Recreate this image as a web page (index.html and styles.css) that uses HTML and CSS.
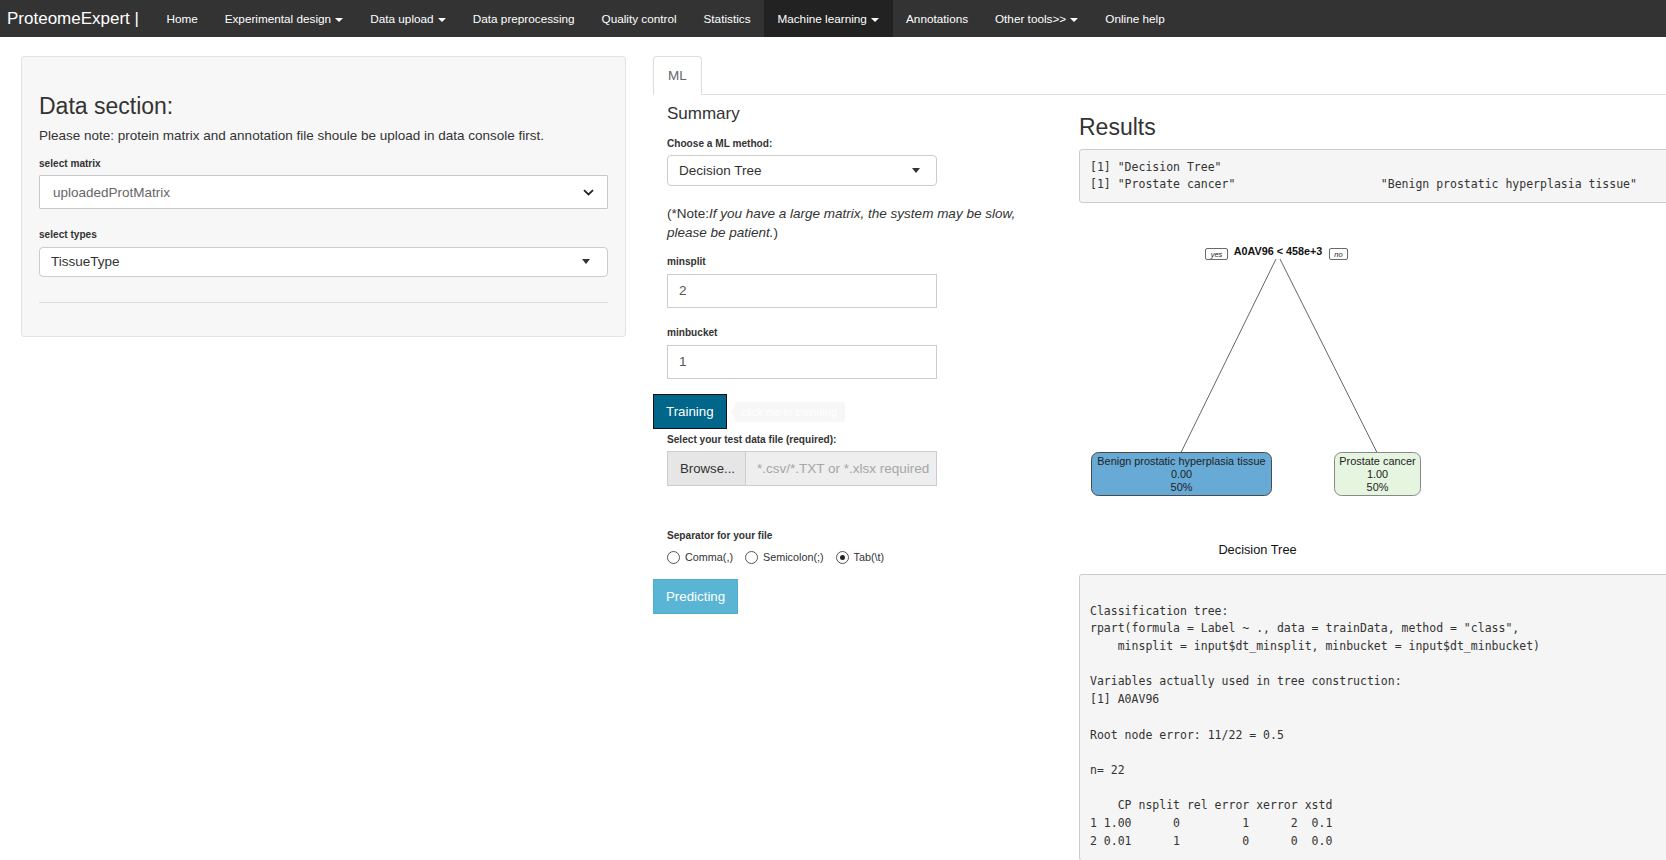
FILE: index.html
```html
<!DOCTYPE html>
<html lang="en">
<head>
<meta charset="utf-8">
<title>ProteomeExpert</title>
<link rel="stylesheet" href="styles.css">
</head>
<body>
<nav class="navbar">
  <span class="brand">ProteomeExpert |</span>
  <ul class="nav">
    <li class="nav-item">Home</li>
    <li class="nav-item">Experimental design <span class="caret"></span></li>
    <li class="nav-item">Data upload <span class="caret"></span></li>
    <li class="nav-item">Data preprocessing</li>
    <li class="nav-item">Quality control</li>
    <li class="nav-item">Statistics</li>
    <li class="nav-item active">Machine learning <span class="caret"></span></li>
    <li class="nav-item">Annotations</li>
    <li class="nav-item">Other tools&gt;&gt; <span class="caret"></span></li>
    <li class="nav-item">Online help</li>
  </ul>
</nav>

<div class="page">
  <aside class="well">
    <h3 class="well-title">Data section:</h3>
    <p class="well-note">Please note: protein matrix and annotation file shoule be upload in data console first.</p>
    <label class="field-label">select matrix</label>
    <div class="native-select">
      <span class="native-value">uploadedProtMatrix</span>
      <svg class="chev" width="11" height="7" viewBox="0 0 11 7"><polyline points="1,1.2 5.5,5.4 10,1.2" fill="none" stroke="#222" stroke-width="1.8"/></svg>
    </div>
    <label class="field-label types-label">select types</label>
    <div class="selectize wide">
      <span class="sel-value">TissueType</span>
      <span class="sel-caret"></span>
    </div>
    <hr class="well-rule">
  </aside>

  <main class="main">
    <ul class="tabs">
      <li class="tab">ML</li>
    </ul>
    <div class="tab-content">
      <section class="ml-col">
        <h4 class="summary in">Summary</h4>
        <label class="field-label in method-label">Choose a ML method:</label>
        <div class="selectize narrow in">
          <span class="sel-value">Decision Tree</span>
          <span class="sel-caret"></span>
        </div>
        <p class="note in"><span class="note-lead">(*Note:</span><em>If you have a large matrix, the system may be slow,</em> <em>please be patient.</em><span class="note-tail">)</span></p>
        <label class="field-label in split-label">minsplit</label>
        <div class="text-input in">2</div>
        <label class="field-label in bucket-label">minbucket</label>
        <div class="text-input in">1</div>
        <div class="train-row">
          <span class="btn btn-train">Training</span>
          <span class="tooltip">click me to trainning</span>
        </div>
        <label class="field-label in file-label">Select your test data file (required):</label>
        <div class="file-row in">
          <span class="browse">Browse...</span>
          <span class="file-text">*.csv/*.TXT or *.xlsx required</span>
        </div>
        <label class="field-label in sep-label">Separator for your file</label>
        <div class="radio-row in">
          <span class="radio"></span><span class="radio-text">Comma(,)</span>
          <span class="radio"></span><span class="radio-text">Semicolon(;)</span>
          <span class="radio checked"></span><span class="radio-text">Tab(\t)</span>
        </div>
        <span class="btn btn-predict">Predicting</span>
      </section>

      <section class="results">
        <h3 class="results-title">Results</h3>
<pre class="console console-top">[1] "Decision Tree"
[1] "Prostate cancer"                     "Benign prostatic hyperplasia tissue"</pre>
        <svg class="tree" width="587" height="371" viewBox="0 0 587 371">
          <line x1="197" y1="56" x2="102" y2="249.5" class="tree-edge"/>
          <line x1="201" y1="56" x2="298" y2="249.5" class="tree-edge"/>
          <rect x="126.5" y="45.5" width="22" height="11" rx="1.5" class="tree-tag"/>
          <text x="137.5" y="53.6" class="tree-yn">yes</text>
          <text x="199" y="52" class="tree-split">A0AV96 &lt; 458e+3</text>
          <rect x="250.5" y="45.5" width="18" height="11" rx="1.5" class="tree-tag"/>
          <text x="259.5" y="53.6" class="tree-yn">no</text>
          <rect x="12.5" y="249.5" width="180" height="43" rx="7" class="leaf leaf-blue"/>
          <text x="102.5" y="262" class="tree-leaf">Benign prostatic hyperplasia tissue</text>
          <text x="102.5" y="275" class="tree-leaf">0.00</text>
          <text x="102.5" y="288" class="tree-leaf">50%</text>
          <rect x="255.5" y="249.5" width="86" height="43" rx="7" class="leaf leaf-green"/>
          <text x="298.5" y="262" class="tree-leaf">Prostate cancer</text>
          <text x="298.5" y="275" class="tree-leaf">1.00</text>
          <text x="298.5" y="288" class="tree-leaf">50%</text>
          <text x="178.5" y="350.5" class="tree-caption">Decision Tree</text>
        </svg>
<pre class="console console-bottom">

Classification tree:
rpart(formula = Label ~ ., data = trainData, method = "class", 
    minsplit = input$dt_minsplit, minbucket = input$dt_minbucket)

Variables actually used in tree construction:
[1] A0AV96

Root node error: 11/22 = 0.5

n= 22

    CP nsplit rel error xerror xstd
1 1.00      0         1      2  0.1
2 0.01      1         0      0  0.0
</pre>
      </section>
    </div>
  </main>
</div>
</body>
</html>
```

FILE: styles.css
```css
* { box-sizing: border-box; }

html, body {
  margin: 0;
  padding: 0;
  height: 100%;
  overflow: hidden;
}

body {
  font-family: "Liberation Sans", Arial, Helvetica, sans-serif;
  font-size: 13.5px;
  color: #333;
  background: #fff;
}

/* ---------- navbar ---------- */
.navbar {
  display: flex;
  height: 37px;
  background: #333;
  color: #fff;
}

.brand {
  font-size: 17px;
  line-height: 37px;
  padding: 0 14px 0 7px;
  white-space: nowrap;
}

.nav {
  display: flex;
  list-style: none;
  margin: 0;
  padding: 0;
}

.nav-item {
  font-size: 11.75px;
  line-height: 37px;
  padding: 0 13.45px;
  white-space: nowrap;
  color: #fff;
}

.nav-item.active { background: #222; }

.caret {
  display: inline-block;
  width: 0;
  height: 0;
  border-top: 4px solid #fff;
  border-left: 4px solid transparent;
  border-right: 4px solid transparent;
  vertical-align: middle;
  margin-left: 1px;
}

/* ---------- page ---------- */
.page {
  display: grid;
  grid-template-columns: 605px 1fr;
  column-gap: 27px;
  padding: 19px 0 0 21px;
}

.well {
  align-self: start;
  background: #f7f7f7;
  border: 1px solid #e3e3e3;
  border-radius: 3px;
  padding: 36px 17px 33px 17px;
}

.well-title {
  margin: 0 0 7px;
  font-size: 23px;
  font-weight: normal;
  line-height: 26px;
}

.well-note {
  margin: 0 0 9.5px;
  line-height: 20px;
}

.field-label {
  display: block;
  font-size: 10.1px;
  font-weight: bold;
  line-height: 15px;
  margin-bottom: 4.5px;
  color: #333;
}

.types-label { margin-top: 17.5px; margin-bottom: 5.5px; }

.native-select {
  display: flex;
  align-items: center;
  justify-content: space-between;
  height: 34px;
  background: #fff;
  border: 1px solid #c8c8c8;
  border-radius: 1px;
  padding: 0 13px 0 13px;
}

.native-value { color: #666; }

.chev { display: block; }

.selectize {
  display: flex;
  align-items: center;
  justify-content: space-between;
  background: #fff;
  border: 1px solid #ccc;
  border-radius: 4px;
  padding: 0 16px 0 11px;
}

.selectize.wide { height: 29.5px; padding-right: 17px; }
.selectize.narrow { width: 270px; height: 31px; }

.sel-value { color: #333; }

.sel-caret {
  width: 0;
  height: 0;
  border-top: 5px solid #333;
  border-left: 4px solid transparent;
  border-right: 4px solid transparent;
}

.well-rule {
  border: 0;
  border-top: 1px solid #ddd;
  margin: 25.5px 0 0;
}

/* ---------- tabs ---------- */
.tabs {
  display: flex;
  list-style: none;
  margin: 0;
  padding: 0;
  height: 39px;
  border-bottom: 1px solid #ddd;
}

.tab {
  height: 39px;
  line-height: 37px;
  padding: 0 14px;
  border: 1px solid #ddd;
  border-bottom-color: #fff;
  border-radius: 4px 4px 0 0;
  background: #fff;
  color: #666;
}

.tab-content {
  display: grid;
  grid-template-columns: 426px 1fr;
}

/* ---------- ML column ---------- */
.ml-col {
  display: flex;
  flex-direction: column;
  align-items: flex-start;
}

.in { margin-left: 14px; }

.summary {
  margin-top: 9px;
  margin-bottom: 0;
  font-size: 17px;
  font-weight: normal;
  line-height: 20px;
}

.method-label { margin-top: 11.5px; }

.note {
  width: 373px;
  margin-top: 17.5px;
  margin-bottom: 0;
  line-height: 19px;
}

.split-label { margin-top: 12px; margin-bottom: 5.5px; }
.bucket-label { margin-top: 16.5px; margin-bottom: 5.5px; }

.text-input {
  width: 270px;
  height: 34px;
  line-height: 32px;
  border: 1px solid #ccc;
  background: #fff;
  padding: 0 11px;
  color: #555;
}

.train-row {
  display: flex;
  align-items: center;
  margin-top: 15px;
}

.btn {
  display: inline-block;
  height: 35px;
  line-height: 33px;
  padding: 0 12px;
  font-size: 13.3px;
  color: #fff;
  border: 1px solid;
  white-space: nowrap;
}

.btn-train {
  background: #00668a;
  border-color: #111;
}

.btn-predict {
  margin-top: 14.5px;
  background: #5ab5d5;
  border-color: #4eaed0;
}

.tooltip {
  position: relative;
  margin-left: 8px;
  height: 20px;
  line-height: 20px;
  padding: 0 8px 0 7px;
  font-size: 10.8px;
  color: #fff;
  background: #f7f7f7;
  border-radius: 2px;
}

.tooltip::before {
  content: "";
  position: absolute;
  left: -5px;
  top: 5px;
  border-right: 5px solid #f7f7f7;
  border-top: 5px solid transparent;
  border-bottom: 5px solid transparent;
}

.file-label { margin-top: 2.5px; }

.file-row {
  display: flex;
  width: 270px;
  height: 35px;
}

.browse {
  width: 79px;
  line-height: 33px;
  padding-left: 12px;
  font-size: 13.2px;
  background: #e6e6e6;
  border: 1px solid #ccc;
  color: #333;
  white-space: nowrap;
}

.file-text {
  flex: 1;
  line-height: 33px;
  padding-left: 11px;
  background: #eee;
  border: 1px solid #ccc;
  border-left: 0;
  color: #a6a6a6;
  white-space: nowrap;
  overflow: hidden;
}

.sep-label { margin-top: 41.5px; margin-bottom: 7px; }

.radio-row {
  display: flex;
  align-items: center;
  height: 15px;
  font-size: 10.8px;
}

.radio {
  position: relative;
  width: 13px;
  height: 13px;
  border: 1px solid #555;
  border-radius: 50%;
  background: #fff;
}

.radio.checked::after {
  content: "";
  position: absolute;
  left: 3px;
  top: 3px;
  width: 5px;
  height: 5px;
  border-radius: 50%;
  background: #222;
}

.radio-text {
  margin-left: 5px;
  margin-right: 12px;
}

/* ---------- results ---------- */
.results { margin-right: -40px; }

.results-title {
  margin: 19px 0 9px;
  font-size: 23px;
  font-weight: normal;
  line-height: 26px;
}

.console {
  margin: 0;
  font-family: "DejaVu Sans Mono", "Liberation Mono", monospace;
  font-size: 11.5px;
  line-height: 17.7px;
  color: #333;
  background: #f5f5f5;
  border: 1px solid #ccc;
  border-radius: 3px;
  padding: 8.5px 10px;
  white-space: pre;
}

.console-bottom { padding: 9.5px 10px; }

.tree { display: block; }

.tree-edge { stroke: #666; stroke-width: 1; }

.tree-tag { fill: #fff; stroke: #444; stroke-width: 0.8; }

.tree text {
  font-family: "Liberation Sans", Arial, sans-serif;
  text-anchor: middle;
  fill: #222;
}

.tree .tree-yn { font-size: 7.5px; font-style: italic; }
.tree .tree-split { font-size: 10.8px; font-weight: bold; fill: #111; }
.tree .tree-leaf { font-size: 10.9px; }
.tree .tree-caption { font-size: 12.8px; fill: #111; }

.leaf { stroke-width: 1; }
.leaf-blue { fill: #67aad6; stroke: #4a4a4a; }
.leaf-green { fill: #e5f5e0; stroke: #888; }
```
